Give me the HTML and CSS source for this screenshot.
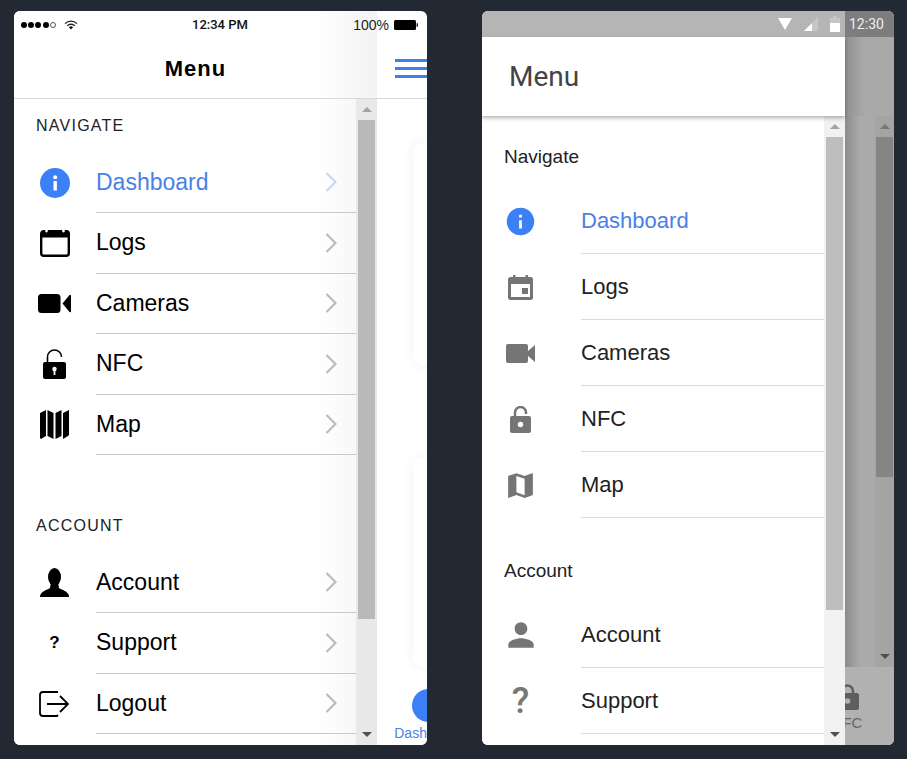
FILE: index.html
```html
<!DOCTYPE html>
<html>

<head>
    <title>Menu</title>
    <link rel="stylesheet" href="styles.css">
</head>

<body>
    <!-- iOS -->
    <div class="phone ios">
        <div class="ios-status">
            <div class="ios-status-left">
                <span class="dot"></span><span class="dot"></span><span class="dot"></span><span class="dot"></span><span class="dot hollow"></span>
                <svg class="wifi" width="14" height="10" viewBox="0 0 14 10">
                    <path d="M1 3.6a8.5 8.5 0 0 1 12 0M3.2 5.8a5.4 5.4 0 0 1 7.6 0" fill="none" stroke="#222" stroke-width="1.3"/>
                    <path d="M4.9 7.3a3 3 0 0 1 4.2 0L7 9.6z" fill="#111"/>
                </svg>
            </div>
            <div class="ios-time">12:34 PM</div>
            <div class="ios-status-right">
                <span>100%</span>
                <svg width="24" height="10" viewBox="0 0 24 10">
                    <rect x="0" y="0" width="22" height="10" rx="1.5" fill="#000"/>
                    <rect x="22.500" y="3" width="1.500" height="4" rx=".7" fill="#333"/>
                </svg>
            </div>
        </div>

        <div class="drawer">
            <div class="ios-title">Menu</div>
            <div class="drawer-body">
                <div class="list">
                    <div class="section-label first">NAVIGATE</div>
                    <div class="row active">
                        <div class="row-icon">
                            <svg width="30" height="30" viewBox="0 0 30 30">
                                <circle cx="15" cy="15" r="15" fill="#3b80f7"/>
                                <circle cx="15.2" cy="9.2" r="2" fill="#fff"/>
                                <rect x="13.5" y="13" width="3.4" height="9.5" fill="#fff"/>
                            </svg>
                        </div>
                        <div class="row-body"><span>Dashboard</span><svg class="chevron" width="12" height="20" viewBox="0 0 12 20"><path d="M1.5 1l9 9-9 9" fill="none" stroke-width="2.2"/></svg></div>
                    </div>
                    <div class="row">
                        <div class="row-icon">
                            <svg width="30" height="28" viewBox="0 0 30 28">
                                <rect x="1.2" y="2.2" width="27.6" height="24.6" rx="2.5" fill="#fff" stroke="#000" stroke-width="2.4"/>
                                <rect x="1" y="2" width="28" height="6.5" fill="#000"/>
                                <circle cx="6.5" cy="2" r="1.4" fill="#fff"/>
                                <circle cx="23.5" cy="2" r="1.4" fill="#fff"/>
                            </svg>
                        </div>
                        <div class="row-body"><span>Logs</span><svg class="chevron" width="12" height="20" viewBox="0 0 12 20"><path d="M1.5 1l9 9-9 9" fill="none" stroke-width="2.2"/></svg></div>
                    </div>
                    <div class="row">
                        <div class="row-icon">
                            <svg width="33" height="19" viewBox="0 0 33 19">
                                <rect x="0" y="0" width="22.5" height="19" rx="3.5" fill="#000"/>
                                <path d="M24.5 9.5L31.5 1a1 1 0 0 1 1.5 .5v16a1 1 0 0 1-1.5 .5z" fill="#000"/>
                            </svg>
                        </div>
                        <div class="row-body"><span>Cameras</span><svg class="chevron" width="12" height="20" viewBox="0 0 12 20"><path d="M1.5 1l9 9-9 9" fill="none" stroke-width="2.2"/></svg></div>
                    </div>
                    <div class="row">
                        <div class="row-icon">
                            <svg width="23" height="30" viewBox="0 0 23 30">
                                <path d="M4.5 13V8a7 7 0 0 1 14 0" fill="none" stroke="#000" stroke-width="1.6"/>
                                <rect x="0" y="13" width="23" height="17" rx="2" fill="#000"/>
                                <circle cx="11.5" cy="20" r="2.2" fill="#fff"/>
                                <rect x="10.6" y="20" width="1.8" height="6" fill="#fff"/>
                            </svg>
                        </div>
                        <div class="row-body"><span>NFC</span><svg class="chevron" width="12" height="20" viewBox="0 0 12 20"><path d="M1.5 1l9 9-9 9" fill="none" stroke-width="2.2"/></svg></div>
                    </div>
                    <div class="row">
                        <div class="row-icon">
                            <svg width="29" height="29" viewBox="0 0 29 29">
                                <path d="M0 3l6-3v26l-5 3-1-1zM7.500 0l6 3v26l-6-3zM15.500 3l6-3v26l-6 3zM23 3l6-3v25l-1 1-5 3z" fill="#000"/>
                            </svg>
                        </div>
                        <div class="row-body"><span>Map</span><svg class="chevron" width="12" height="20" viewBox="0 0 12 20"><path d="M1.5 1l9 9-9 9" fill="none" stroke-width="2.2"/></svg></div>
                    </div>

                    <div class="section-label second">ACCOUNT</div>
                    <div class="row">
                        <div class="row-icon">
                            <svg width="29" height="29" viewBox="0 0 29 29">
                                <ellipse cx="14.500" cy="9" rx="6.500" ry="9" fill="#000"/>
                                <path d="M11 14h7l1 6c3 2 9 3 10 8v1H0v-1c1-5 7-6 10-8z" fill="#000"/>
                            </svg>
                        </div>
                        <div class="row-body"><span>Account</span><svg class="chevron" width="12" height="20" viewBox="0 0 12 20"><path d="M1.5 1l9 9-9 9" fill="none" stroke-width="2.2"/></svg></div>
                    </div>
                    <div class="row">
                        <div class="row-icon"><span class="question">?</span></div>
                        <div class="row-body"><span>Support</span><svg class="chevron" width="12" height="20" viewBox="0 0 12 20"><path d="M1.5 1l9 9-9 9" fill="none" stroke-width="2.2"/></svg></div>
                    </div>
                    <div class="row">
                        <div class="row-icon">
                            <svg width="31" height="26" viewBox="0 0 31 26">
                                <path d="M19 1H4a3 3 0 0 0-3 3v18a3 3 0 0 0 3 3h14l1-1" fill="none" stroke="#000" stroke-width="1.8"/>
                                <path d="M8 13h21M21 5l8 8-8 8" fill="none" stroke="#000" stroke-width="1.8"/>
                            </svg>
                        </div>
                        <div class="row-body"><span>Logout</span><svg class="chevron" width="12" height="20" viewBox="0 0 12 20"><path d="M1.5 1l9 9-9 9" fill="none" stroke-width="2.2"/></svg></div>
                    </div>
                </div>
                <div class="scrollbar">
                    <div class="scroll-btn"><span class="arrow-up"></span></div>
                    <div class="thumb"></div>
                    <div class="scroll-rest"></div>
                    <div class="scroll-btn"><span class="arrow-down"></span></div>
                </div>
            </div>
        </div>

        <div class="peek">
            <div class="peek-head">
                <div class="burger"><span></span><span></span><span></span></div>
            </div>
            <div class="peek-main">
                <div class="card"></div>
                <div class="card short"></div>
            </div>
            <div class="peek-tabs">
                <div class="peek-tab">
                    <div class="peek-circle"></div>
                    <div class="peek-label">Dashboard</div>
                </div>
            </div>
        </div>
    </div>

    <!-- Android -->
    <div class="phone android">
        <div class="android-status">
            <div class="status-main">
                <svg width="14" height="12" viewBox="0 0 14 12"><path d="M0 0h14L7 12z" fill="#fff"/></svg>
                <svg width="14" height="14" viewBox="0 0 14 14"><path d="M14 0v14H0z" fill="#c6c6c6"/><path d="M8 6v8H0z" fill="#fff"/></svg>
                <svg width="10" height="16" viewBox="0 0 10 16"><path d="M3 0h4v2h3v5H0V2h3z" fill="#c6c6c6"/><rect y="7" width="10" height="9" fill="#fff"/></svg>
            </div>
            <div class="status-dim">12:30</div>
        </div>
        <div class="android-app">
            <div class="drawer">
                <div class="android-title">Menu</div>
                <div class="drawer-body">
                    <div class="list">
                        <div class="section-label first">Navigate</div>
                        <div class="row active">
                            <div class="row-icon">
                                <svg width="33" height="33" viewBox="0 0 24 24"><path fill="#3b80f7" d="M12 2C6.480 2 2 6.480 2 12s4.480 10 10 10 10-4.480 10-10S17.520 2 12 2zm1 15h-2v-6h2v6zm0-8h-2V7h2v2z"/></svg>
                            </div>
                            <div class="row-body"><span>Dashboard</span></div>
                        </div>
                        <div class="row">
                            <div class="row-icon">
                                <svg width="25" height="25" viewBox="0 0 25 25">
                                    <path fill-rule="evenodd" d="M5 0h2.500v2h10V0H20v2h2.500A2.500 2.500 0 0 1 25 4.500v18a2.500 2.500 0 0 1-2.500 2.500h-20A2.500 2.500 0 0 1 0 22.500v-18A2.500 2.500 0 0 1 2.500 2H5zM3 9v13h19V9z"/>
                                    <rect x="14" y="13" width="6" height="6"/>
                                </svg>
                            </div>
                            <div class="row-body"><span>Logs</span></div>
                        </div>
                        <div class="row">
                            <div class="row-icon">
                                <svg width="29" height="19" viewBox="0 0 29 19"><path d="M2 0h18a2 2 0 0 1 2 2v5l7-6v17l-7-6v5a2 2 0 0 1-2 2H2a2 2 0 0 1-2-2V2a2 2 0 0 1 2-2z"/></svg>
                            </div>
                            <div class="row-body"><span>Cameras</span></div>
                        </div>
                        <div class="row">
                            <div class="row-icon">
                                <svg width="21" height="27" viewBox="0 0 21 27">
                                    <path d="M5 11V6.500a5.500 5.500 0 0 1 11 0V8" fill="none" stroke="#757575" stroke-width="2.500"/>
                                    <rect y="10" width="21" height="17" rx="2"/>
                                    <circle cx="10.500" cy="18.500" r="2.700" fill="#fff"/>
                                </svg>
                            </div>
                            <div class="row-body"><span>NFC</span></div>
                        </div>
                        <div class="row">
                            <div class="row-icon">
                                <svg width="33" height="33" viewBox="0 0 24 24"><path d="M20.500 3l-.16.03L15 5.100 9 3 3.360 4.900c-.21.07-.36.25-.36.48V20.500c0 .28.22.5.5.5l.16-.03L9 18.900l6 2.100 5.640-1.900c.21-.07.36-.25.36-.48V3.500c0-.28-.22-.5-.5-.5zM15 19l-6-2.110V5l6 2.110V19z"/></svg>
                            </div>
                            <div class="row-body"><span>Map</span></div>
                        </div>

                        <div class="section-label second">Account</div>
                        <div class="row">
                            <div class="row-icon">
                                <svg width="38" height="38" viewBox="0 0 24 24"><path d="M12 12c2.210 0 4-1.790 4-4s-1.790-4-4-4-4 1.790-4 4 1.790 4 4 4zm0 2c-2.670 0-8 1.340-8 4v2h16v-2c0-2.660-5.330-4-8-4z"/></svg>
                            </div>
                            <div class="row-body"><span>Account</span></div>
                        </div>
                        <div class="row">
                            <div class="row-icon"><span class="question">?</span></div>
                            <div class="row-body"><span>Support</span></div>
                        </div>
                    </div>
                    <div class="scrollbar">
                        <div class="scroll-btn"><span class="arrow-up"></span></div>
                        <div class="thumb"></div>
                        <div class="scroll-rest"></div>
                        <div class="scroll-btn"><span class="arrow-down"></span></div>
                    </div>
                </div>
            </div>

            <div class="dim">
                <div class="dim-head"></div>
                <div class="dim-main">
                    <div class="dim-page"></div>
                    <div class="dim-scroll">
                        <div class="scroll-btn"><span class="arrow-up"></span></div>
                        <div class="dim-thumb"></div>
                        <div class="scroll-rest"></div>
                        <div class="scroll-btn"><span class="arrow-down"></span></div>
                    </div>
                </div>
                <div class="dim-tabs">
                    <div class="dim-tab">
                        <svg width="23" height="26" viewBox="0 0 23 26">
                            <path d="M6 11V7a5.500 5.500 0 0 1 11 0v4" fill="none" stroke="#5e5e5e" stroke-width="2.500"/>
                            <rect y="9" width="23" height="17" rx="2" fill="#5e5e5e"/>
                            <circle cx="11.500" cy="17" r="2.800" fill="#b0b0b0"/>
                        </svg>
                        <div class="dim-label">NFC</div>
                    </div>
                </div>
            </div>
        </div>
    </div>
</body>

</html>
```

FILE: styles.css
```css
body {
    background-color: #232932;
    margin: 0;
    padding: 11px 0 0 14px;
    display: flex;
    gap: 55px;
    font-family: 'Liberation Sans', Arial, sans-serif;
    color: #111;
}

.phone {
    width: 413px;
    height: 734px;
    border-radius: 6px;
    overflow: hidden;
    position: relative;
    background-color: #fff;
    flex: none;
}

.ios {
    display: flex;
}

.android {
    width: 412px;
    display: flex;
    flex-direction: column;
}

/* shared drawer parts */
.drawer {
    width: 363px;
    flex: none;
    display: flex;
    flex-direction: column;
}

.drawer-body {
    flex: 1;
    display: flex;
    min-height: 0;
}

.list {
    width: 342px;
    flex: none;
    overflow: hidden;
}

.row {
    display: flex;
}

.row-icon {
    display: flex;
    align-items: center;
    justify-content: center;
    flex: none;
}

.row-body {
    flex: 1;
    display: flex;
    align-items: center;
    justify-content: space-between;
    border-bottom: 1px solid #c9c9c9;
}

.row.active .row-body span {
    color: #4a7fe8;
}

.chevron {
    stroke: #bbb;
}

.row.active .chevron {
    stroke: #c6d7f8;
}

.section-label {
    display: flex;
    align-items: center;
    box-sizing: border-box;
}

.scrollbar {
    width: 21px;
    flex: none;
    display: flex;
    flex-direction: column;
}

.scroll-btn {
    height: 21px;
    flex: none;
    display: flex;
    align-items: center;
    justify-content: center;
}

.scroll-rest {
    flex: 1;
}

.arrow-up {
    border-left: 5px solid transparent;
    border-right: 5px solid transparent;
    border-bottom: 5px solid #a3a3a3;
}

.arrow-down {
    border-left: 5px solid transparent;
    border-right: 5px solid transparent;
    border-top: 5px solid #505050;
}

/* iOS side */
.ios-status {
    position: absolute;
    top: 0;
    left: 0;
    right: 0;
    height: 27px;
    display: flex;
    align-items: center;
    padding: 0 9px 0 7px;
    font-size: 13px;
}

.ios-status-left {
    display: flex;
    align-items: center;
    gap: 1.2px;
    width: 120px;
}

.dot {
    width: 6px;
    height: 6px;
    border-radius: 50%;
    background-color: #000;
    box-sizing: border-box;
}

.dot.hollow {
    background: none;
    border: 1px solid #555;
}

.wifi {
    margin-left: 7px;
}

.ios-time {
    font-family: Roboto, sans-serif;
    font-weight: 500;
    margin-left: 51px;
}

.ios-status-right {
    display: flex;
    align-items: center;
    gap: 5px;
    font-size: 14px;
    color: #222;
    margin-left: auto;
}

.ios .drawer {
    background: linear-gradient(to right, #fff 84%, #f3f3f3 100%);
}

.ios-title {
    height: 88px;
    box-sizing: border-box;
    padding-top: 27px;
    line-height: 62px;
    border-bottom: 1px solid #d9d9d9;
    text-align: center;
    font-size: 22px;
    font-weight: bold;
    letter-spacing: 1px;
    color: #000;
}

.ios .section-label {
    font-size: 16px;
    letter-spacing: 1.25px;
    color: #222;
    padding-left: 22px;
    height: 53.5px;
}

.ios .section-label.second {
    margin-top: 44px;
}

.ios .row {
    height: 60.5px;
    box-sizing: border-box;
}

.ios .row-icon {
    width: 81px;
    margin-right: 1px;
}

.ios .row-body {
    font-size: 23px;
    padding-right: 19px;
    color: #000;
}

.ios .question {
    font-size: 17px;
    font-weight: bold;
    color: #000;
}

.ios .scrollbar {
    background-color: #e8e8e8;
}

.ios .thumb {
    height: 499px;
    margin: 0 2px;
    background-color: #b9b9b9;
    flex: none;
}

.peek {
    flex: 1;
    display: flex;
    flex-direction: column;
    overflow: hidden;
    min-width: 0;
}

.peek-head {
    height: 88px;
    box-sizing: border-box;
    padding-top: 27px;
    border-bottom: 1px solid #d9d9d9;
    flex: none;
}

.burger {
    margin: 21px 0 0 18px;
    display: flex;
    flex-direction: column;
    gap: 5px;
}

.burger span {
    height: 3px;
    background-color: #3f7fee;
}

.peek-main {
    flex: 1;
    padding: 44px 0 0 36px;
    min-height: 0;
}

.card {
    height: 222px;
    width: 100px;
    border-radius: 10px;
    background-color: #fff;
    box-shadow: 0 0 14px rgba(0, 0, 0, 0.06);
    margin-bottom: 92px;
}

.card.short {
    height: 210px;
    margin-bottom: 0;
}

.peek-tabs {
    height: 69px;
    flex: none;
    padding: 13px 0 0 18px;
    box-sizing: border-box;
    background-color: #fff;
}

.peek-tab {
    width: 67px;
    display: flex;
    flex-direction: column;
    align-items: center;
}

.peek-circle {
    width: 33px;
    height: 33px;
    border-radius: 50%;
    background-color: #3b80f7;
}

.peek-label {
    font-size: 14px;
    line-height: 16px;
    margin-top: 3px;
    color: #4a7fe8;
    white-space: nowrap;
}

/* Android side */
.android-status {
    height: 26px;
    flex: none;
    display: flex;
}

.status-main {
    width: 363px;
    flex: none;
    background-color: #b5b5b5;
    display: flex;
    align-items: center;
    justify-content: flex-end;
    gap: 12px;
    padding-right: 5px;
    box-sizing: border-box;
}

.status-dim {
    flex: 1;
    background-color: #7d7d7d;
    color: #eee;
    font-family: Roboto, sans-serif;
    font-size: 14px;
    line-height: 26px;
    padding-left: 4px;
}

.android-app {
    flex: 1;
    display: flex;
    min-height: 0;
}

.android .drawer {
    background-color: #fff;
}

.android-title {
    height: 79px;
    flex: none;
    line-height: 80px;
    padding-left: 27px;
    font-family: Roboto, sans-serif;
    font-size: 28px;
    color: #444;
    position: relative;
    box-shadow: 0 2px 4px rgba(0, 0, 0, 0.3);
}

.android .section-label {
    font-size: 19px;
    color: #222;
    padding-left: 22px;
}

.android .section-label.first {
    height: 72px;
    padding-top: 10px;
}

.android .section-label.second {
    height: 84px;
    padding-top: 22px;
}

.android .row {
    height: 66px;
    box-sizing: border-box;
}

.android .row-icon {
    width: 77px;
    margin-right: 22px;
}

.android .row-icon svg {
    fill: #757575;
}

.android .row-body {
    font-size: 22px;
    color: #222;
    border-bottom-color: #dcdcdc;
}

.android .question {
    font-family: Roboto, sans-serif;
    font-size: 36px;
    font-weight: 500;
    color: #777;
}

.android .scrollbar {
    background-color: #f1f1f1;
}

.android .thumb {
    height: 473px;
    margin: 0 2px;
    background-color: #bdbdbd;
    flex: none;
}

.dim {
    flex: 1;
    display: flex;
    flex-direction: column;
    min-width: 0;
    overflow: hidden;
    background-color: #a8a8a8;
}

.dim-head {
    height: 79px;
    flex: none;
    background: linear-gradient(to right, #909090, #a9a9a9 40%);
    box-shadow: 0 1px 2px rgba(0, 0, 0, 0.25);
}

.dim-main {
    flex: 1;
    display: flex;
    min-height: 0;
}

.dim-page {
    flex: 1;
    background: linear-gradient(to right, #8c8c8c, #aaa 50%);
}

.dim-scroll {
    width: 19px;
    flex: none;
    display: flex;
    flex-direction: column;
    background-color: #a4a4a4;
}

.dim-scroll .arrow-up {
    border-bottom-color: #777;
}

.dim-thumb {
    height: 340px;
    margin: 0 1px;
    background-color: #858585;
    flex: none;
}

.dim-tabs {
    height: 78px;
    flex: none;
    background-color: #b1b1b1;
    padding-top: 17px;
    box-sizing: border-box;
}

.dim-tab {
    width: 40px;
    margin-left: -18px;
    display: flex;
    flex-direction: column;
    align-items: center;
}

.dim-label {
    font-size: 15px;
    line-height: 16px;
    margin-top: 5px;
    color: #666;
}
```
